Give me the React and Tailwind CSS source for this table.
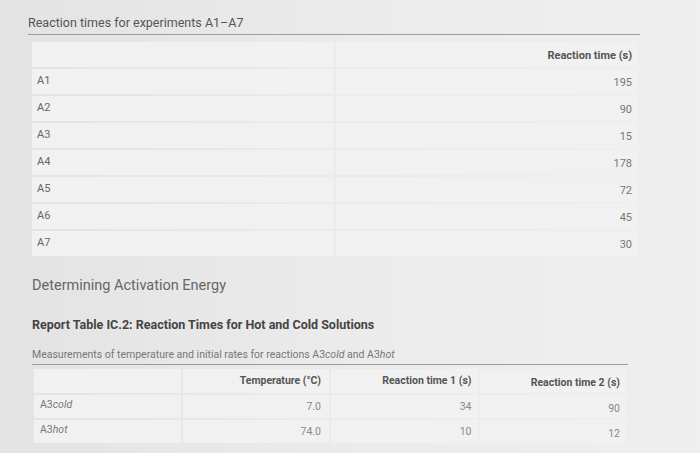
export default function App() {
  const rows1 = [
    ["A1", "195"],
    ["A2", "90"],
    ["A3", "15"],
    ["A4", "178"],
    ["A5", "72"],
    ["A6", "45"],
    ["A7", "30"],
  ];
  const rows2 = [
    ["cold", "7.0", "34", "90"],
    ["hot", "74.0", "10", "12"],
  ];
  return (
    <div
      className="w-[700px] h-[453px] overflow-hidden bg-gradient-to-r from-[#e3e3e3] via-[#ebebeb] to-[#efefef] text-[#666]"
      style={{ fontFamily: "Roboto, 'Liberation Sans', sans-serif" }}
    >
      <div className="pl-[28px] pt-[15px]">
        <div className="w-[612px] border-b border-[#9c9c9c] pb-[4px]">
          <p className="text-[12.5px] leading-[15px] text-[#555]">
            Reaction times for experiments A1–A7
          </p>
        </div>
        <table className="ml-[2px] mt-[5px] w-[610px] border-separate border-spacing-[2px] text-[11px]">
          <thead>
            <tr>
              <th className="h-[25px] w-1/2 bg-[#f1f1f1]"></th>
              <th className="h-[25px] w-1/2 bg-[#f1f1f1] pr-[6px] pt-[4px] text-right font-bold text-[#555]">
                Reaction time (s)
              </th>
            </tr>
          </thead>
          <tbody>
            {rows1.map(([a, b]) => (
              <tr key={a}>
                <td className="h-[25px] bg-[#f1f1f1] pl-[5px] text-[#666]">{a}</td>
                <td className="h-[25px] bg-[#f1f1f1] pr-[6px] pt-[3px] text-right text-[#777]">{b}</td>
              </tr>
            ))}
          </tbody>
        </table>
      </div>
      <div className="pl-[32px] pt-[19px]">
        <h2 className="text-[14.5px] leading-[18px] text-[#666]">Determining Activation Energy</h2>
        <h3 className="mt-[22px] text-[12.5px] leading-[16px] font-bold text-[#444]">
          Report Table IC.2: Reaction Times for Hot and Cold Solutions
        </h3>
        <div className="mt-[15px] w-[596px] border-b border-[#9c9c9c] pb-[3px]">
          <p className="text-[10.5px] leading-[13px] text-[#777]">
            Measurements of temperature and initial rates for reactions A3<i>cold</i> and A3<i>hot</i>
          </p>
        </div>
        <table className="mt-[2px] w-[596px] border-separate border-spacing-[2px] text-[10.5px]">
          <thead>
            <tr>
              <th className="h-[24px] w-1/4 bg-[#f1f1f1]"></th>
              <th className="h-[24px] w-1/4 bg-[#f1f1f1] pr-[8px] text-right font-bold text-[#555]">
                Temperature (°C)
              </th>
              <th className="h-[24px] w-1/4 bg-[#f1f1f1] pr-[6px] text-right font-bold text-[#555]">
                Reaction time 1 (s)
              </th>
              <th className="h-[24px] w-1/4 bg-[#f1f1f1] pr-[6px] pt-[3px] text-right font-bold text-[#555]">
                Reaction time 2 (s)
              </th>
            </tr>
          </thead>
          <tbody>
            {rows2.map(([n, t, r1, r2]) => (
              <tr key={n}>
                <td className="h-[23px] bg-[#f1f1f1] pl-[6px] pb-[3px] text-[#777]">
                  A3<i>{n}</i>
                </td>
                <td className="h-[23px] bg-[#f1f1f1] pr-[8px] text-right text-[#888]">{t}</td>
                <td className="h-[23px] bg-[#f1f1f1] pr-[6px] pt-[1px] text-right text-[#888]">{r1}</td>
                <td className="h-[23px] bg-[#f1f1f1] pr-[6px] pt-[4px] text-right text-[#888]">{r2}</td>
              </tr>
            ))}
          </tbody>
        </table>
      </div>
    </div>
  );
}
